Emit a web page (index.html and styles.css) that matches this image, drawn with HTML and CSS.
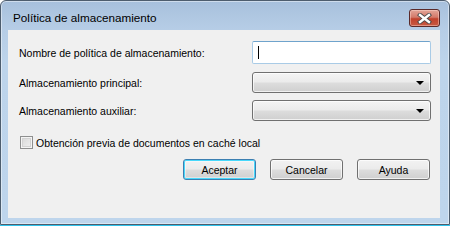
FILE: index.html
```html
<!DOCTYPE html>
<html lang="es">
<head>
<meta charset="utf-8">
<title>Política de almacenamiento</title>
<link rel="stylesheet" href="styles.css">
</head>
<body>
<div class="window">
  <div class="titlebar">
    <span class="title">Política de almacenamiento</span>
    <div class="close">
      <svg width="15" height="11" viewBox="0 0 15 11">
        <path d="M3 2 L12 9 M12 2 L3 9" stroke="#4a4a4a" stroke-width="4.2" stroke-linecap="square" fill="none"/>
        <path d="M3 2 L12 9 M12 2 L3 9" stroke="#ffffff" stroke-width="2.4" stroke-linecap="square" fill="none"/>
      </svg>
    </div>
  </div>
  <div class="content">
    <div class="row r1">
      <label class="lbl">Nombre de política de almacenamiento:</label>
      <div class="textbox"><span class="caret"></span></div>
    </div>
    <div class="row r2">
      <label class="lbl">Almacenamiento principal:</label>
      <div class="combo"><span class="arrow"></span></div>
    </div>
    <div class="row r3">
      <label class="lbl">Almacenamiento auxiliar:</label>
      <div class="combo"><span class="arrow"></span></div>
    </div>
    <div class="check-row">
      <span class="checkbox"></span>
      <span class="lbl">Obtención previa de documentos en caché local</span>
    </div>
    <div class="buttons">
      <button class="btn default">Aceptar</button>
      <button class="btn">Cancelar</button>
      <button class="btn">Ayuda</button>
    </div>
  </div>
</div>
</body>
</html>
```

FILE: styles.css
```css
html {
  background: linear-gradient(to bottom, #ffffff 225px, #2fc3ec 225px);
  height: 226px;
}
body {
  margin: 0;
  width: 450px;
  height: 226px;
  overflow: hidden;
  font-family: "Liberation Sans", Arial, sans-serif;
  font-size: 10.5px;
  color: #000;
}
.window {
  box-sizing: border-box;
  width: 450px;
  height: 225px;
  border: 1px solid #4d5d6e;
  border-radius: 6px 6px 0 0;
  background: linear-gradient(to bottom, #a7c0dc 0px, #b6cde6 28px, #bdd4eb 60px, #bed5ec 100%);
  box-shadow: inset 0 0 0 1px rgba(255,255,255,0.45);
  display: flex;
  flex-direction: column;
}
.titlebar {
  height: 29px;
  display: flex;
  justify-content: space-between;
  align-items: flex-start;
  padding: 0 9px 0 12px;
}
.title {
  font-family: "Liberation Sans", Arial, sans-serif;
  font-size: 11.7px;
  line-height: 14px;
  margin-top: 10px;
  color: #000;
}
.close {
  box-sizing: border-box;
  width: 31px;
  height: 18px;
  margin-top: 8px;
  border: 1px solid #5a2a2a;
  border-radius: 3px;
  background: linear-gradient(to bottom, #e3a598 0%, #d47a6a 45%, #c1422d 55%, #c85a43 100%);
  box-shadow: inset 0 0 0 1px rgba(255,220,210,0.45);
  display: flex;
  align-items: center;
  justify-content: center;
}
.close svg { display: block; }
.content {
  flex: 1;
  margin: 0 9px 6px 7px;
  background: #f0f0f0;
  padding: 11px 9px 0 11px;
  display: flex;
  flex-direction: column;
}
.row {
  display: flex;
  justify-content: space-between;
  align-items: center;
}
.r1 { height: 23px; }
.r2 { height: 21px; margin-top: 8px; }
.r3 { height: 21px; margin-top: 7px; }
.lbl { white-space: nowrap; }
.textbox {
  box-sizing: border-box;
  width: 179px;
  height: 23px;
  background: #fff;
  border: 1px solid #a9cbe6;
  border-top-color: #6fa3cc;
  border-radius: 2px;
  display: flex;
  align-items: center;
  padding-left: 5px;
}
.caret {
  display: block;
  width: 1px;
  height: 13px;
  background: #000;
}
.combo {
  box-sizing: border-box;
  width: 179px;
  height: 21px;
  border: 1px solid #707070;
  border-radius: 3px;
  background: linear-gradient(to bottom, #f4f4f4 0%, #ebebeb 48%, #dddddd 52%, #cfcfcf 100%);
  box-shadow: inset 0 0 0 1px rgba(255,255,255,0.7);
  display: flex;
  align-items: center;
  justify-content: flex-end;
  padding-right: 6px;
}
.arrow {
  width: 0;
  height: 0;
  border-left: 4px solid transparent;
  border-right: 4px solid transparent;
  border-top: 4px solid #000;
  margin-top: 1px;
}
.check-row {
  display: flex;
  align-items: center;
  margin-top: 15px;
  height: 13px;
  padding-left: 1px;
}
.checkbox {
  box-sizing: border-box;
  width: 13px;
  height: 13px;
  border: 1px solid #8e8f8f;
  background: linear-gradient(135deg, #d6d6d6 0%, #f2f2f2 100%);
  box-shadow: inset 0 0 0 1px #f4f4f4, inset 0 0 0 2px #d3d3d3;
  margin-right: 3px;
}
.buttons {
  display: flex;
  justify-content: flex-end;
  gap: 14px;
  margin-top: 10px;
  padding-right: 1px;
}
.btn {
  box-sizing: border-box;
  width: 73px;
  height: 21px;
  margin: 0;
  padding: 0;
  font-family: "Liberation Sans", Arial, sans-serif;
  font-size: 10.5px;
  color: #000;
  border: 1px solid #707070;
  border-radius: 3px;
  background: linear-gradient(to bottom, #f2f2f2 0%, #ebebeb 48%, #dddddd 52%, #cfcfcf 100%);
  box-shadow: inset 0 0 0 1px rgba(255,255,255,0.7);
}
.btn.default {
  border-color: #3c7fb1;
  box-shadow: inset 0 0 0 1px #48d8fb, inset 0 0 0 2px rgba(255,255,255,0.4);
}
```
